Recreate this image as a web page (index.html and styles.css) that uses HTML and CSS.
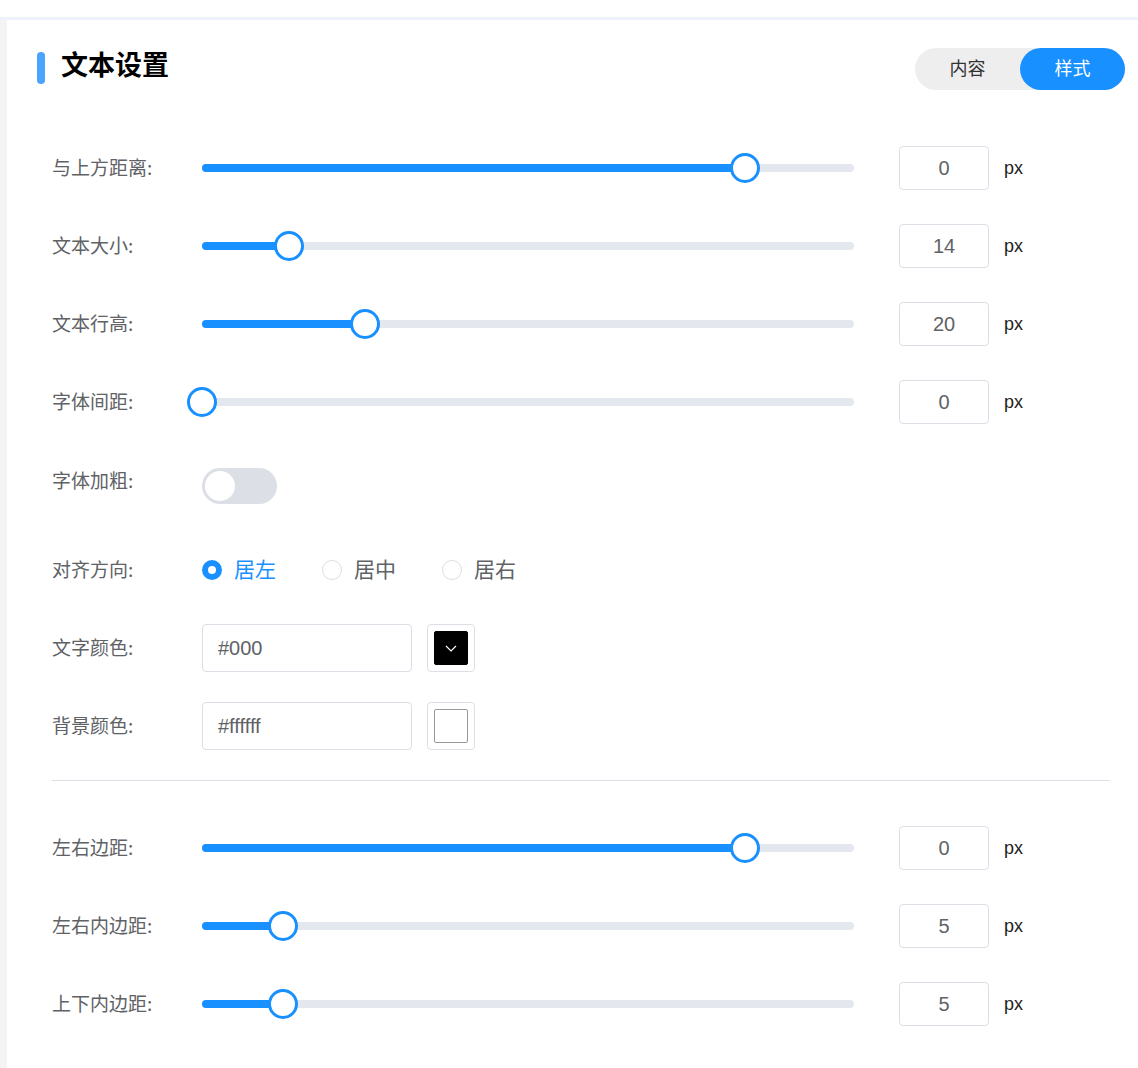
FILE: index.html
```html
<!DOCTYPE html>
<html lang="zh-CN">
<head>
    <meta charset="UTF-8">
    <title>文本设置</title>
    <link rel="stylesheet" href="styles.css">
</head>

<body>
    <div class="topbar"></div>
    <div class="page">
        <div class="side"></div>
        <div class="panel">
            <div class="header">
                <div class="title"><span class="mark"></span>文本设置</div>
                <div class="tabs">
                    <span class="tab">内容</span>
                    <span class="tab active">样式</span>
                </div>
            </div>

            <div class="form">
                <div class="row">
                    <label>与上方距离:</label>
                    <div class="slider"><div class="fill" style="width: 83.3%"></div><span class="thumb" style="left: 83.3%"></span></div>
                    <div class="num">0</div><span class="unit">px</span>
                </div>
                <div class="row">
                    <label>文本大小:</label>
                    <div class="slider"><div class="fill" style="width: 13.3%"></div><span class="thumb" style="left: 13.3%"></span></div>
                    <div class="num">14</div><span class="unit">px</span>
                </div>
                <div class="row">
                    <label>文本行高:</label>
                    <div class="slider"><div class="fill" style="width: 25%"></div><span class="thumb" style="left: 25%"></span></div>
                    <div class="num">20</div><span class="unit">px</span>
                </div>
                <div class="row">
                    <label>字体间距:</label>
                    <div class="slider"><div class="fill" style="width: 0%"></div><span class="thumb" style="left: 0%"></span></div>
                    <div class="num">0</div><span class="unit">px</span>
                </div>
                <div class="row tall">
                    <label>字体加粗:</label>
                    <span class="switch"><span class="knob"></span></span>
                </div>
                <div class="row">
                    <label>对齐方向:</label>
                    <div class="radios">
                        <span class="radio checked"><i></i>居左</span>
                        <span class="radio"><i></i>居中</span>
                        <span class="radio"><i></i>居右</span>
                    </div>
                </div>
                <div class="row">
                    <label>文字颜色:</label>
                    <div class="text-input">#000</div>
                    <div class="picker"><span class="swatch dark">
                        <svg width="14" height="14" viewBox="0 0 14 14"><path d="M2 5 L7 10 L12 5" fill="none" stroke="#fff" stroke-width="1.2"/></svg>
                    </span></div>
                </div>
                <div class="row">
                    <label>背景颜色:</label>
                    <div class="text-input">#ffffff</div>
                    <div class="picker"><span class="swatch light"></span></div>
                </div>

                <div class="divider"></div>

                <div class="row">
                    <label>左右边距:</label>
                    <div class="slider"><div class="fill" style="width: 83.3%"></div><span class="thumb" style="left: 83.3%"></span></div>
                    <div class="num">0</div><span class="unit">px</span>
                </div>
                <div class="row">
                    <label>左右内边距:</label>
                    <div class="slider"><div class="fill" style="width: 12.4%"></div><span class="thumb" style="left: 12.4%"></span></div>
                    <div class="num">5</div><span class="unit">px</span>
                </div>
                <div class="row">
                    <label>上下内边距:</label>
                    <div class="slider"><div class="fill" style="width: 12.4%"></div><span class="thumb" style="left: 12.4%"></span></div>
                    <div class="num">5</div><span class="unit">px</span>
                </div>
            </div>
        </div>
    </div>
</body>
</html>
```

FILE: styles.css
```css
body {
    margin: 0;
    background: #fff;
    font-family: "Noto Sans CJK SC", "Noto Sans", sans-serif;
    color: #606266;
}

.topbar {
    height: 17px;
    background: #fff;
    border-bottom: 3px solid #edf2fd;
}

.page {
    display: flex;
    min-height: 1048px;
}

.side {
    width: 7px;
    background: #f4f4f4;
}

.panel {
    flex: 1;
    padding: 28px 13px 0 30px;
}

.header {
    display: flex;
    justify-content: space-between;
    align-items: center;
    height: 42px;
}

.title {
    display: flex;
    align-items: center;
    font-size: 27px;
    font-weight: bold;
    color: #000;
    margin-top: -12px;
}

.mark {
    width: 8px;
    height: 32px;
    border-radius: 4px;
    background: #4aa3ff;
    margin-right: 16px;
    margin-top: 10px;
}

.tabs {
    display: flex;
    background: #eeeeee;
    border-radius: 21px;
    height: 42px;
}

.tab {
    width: 105px;
    display: flex;
    justify-content: center;
    align-items: center;
    padding-bottom: 5px;
    box-sizing: border-box;
    font-size: 18px;
    color: #333;
    border-radius: 21px;
}

.tab.active {
    background: #1890ff;
    color: #fff;
}

.form {
    padding: 39px 15px 0 15px;
}

.row {
    display: flex;
    align-items: center;
    height: 78px;
}

.row.tall {
    height: 90px;
}

.row label {
    width: 150px;
    flex-shrink: 0;
    font-size: 19px;
    color: #606266;
    margin-top: -4px;
}

.row.tall label {
    margin-top: -14px;
}

.slider {
    position: relative;
    width: 652px;
    height: 8px;
    border-radius: 4px;
    background: #e4e7ed;
}

.fill {
    height: 8px;
    border-radius: 4px;
    background: #1890ff;
}

.thumb {
    position: absolute;
    top: 50%;
    width: 24px;
    height: 24px;
    border: 3px solid #1890ff;
    border-radius: 50%;
    background: #fff;
    transform: translate(-50%, -50%);
}

.num {
    width: 88px;
    height: 42px;
    margin-left: 45px;
    border: 1px solid #dcdfe6;
    border-radius: 4px;
    display: flex;
    justify-content: center;
    align-items: center;
    font-size: 20px;
    font-family: "Liberation Sans", "Noto Sans CJK SC", sans-serif;
    color: #606266;
}

.unit {
    margin-left: 15px;
    font-size: 18px;
    font-family: "Liberation Sans", sans-serif;
    color: #222;
}

.switch {
    position: relative;
    width: 75px;
    height: 36px;
    border-radius: 18px;
    background: #dcdfe6;
}

.knob {
    position: absolute;
    left: 3px;
    top: 3px;
    width: 30px;
    height: 30px;
    border-radius: 50%;
    background: #fff;
}

.radios {
    display: flex;
}

.radio {
    display: flex;
    align-items: center;
    width: 120px;
    font-size: 21px;
    color: #606266;
}

.radio span,
.radio i {
    flex-shrink: 0;
}

.radio i {
    width: 18px;
    height: 18px;
    border: 1px solid #dcdfe6;
    border-radius: 50%;
    margin-right: 12px;
    margin-top: 4px;
    box-sizing: content-box;
}

.radio.checked {
    color: #1890ff;
}

.radio.checked i {
    width: 8px;
    height: 8px;
    border: 6px solid #1890ff;
    background: #fff;
}

.radios {
    margin-top: -4px;
}

.text-input {
    width: 193px;
    height: 46px;
    padding-left: 15px;
    border: 1px solid #dcdfe6;
    border-radius: 4px;
    display: flex;
    align-items: center;
    font-size: 20px;
    font-family: "Liberation Sans", sans-serif;
    color: #606266;
}

.picker {
    width: 46px;
    height: 46px;
    margin-left: 15px;
    border: 1px solid #dcdfe6;
    border-radius: 4px;
    display: flex;
    justify-content: center;
    align-items: center;
}

.swatch {
    width: 32px;
    height: 32px;
    border: 1px solid #999;
    border-radius: 2px;
    display: flex;
    justify-content: center;
    align-items: center;
}

.swatch.dark {
    background: #000;
    border-color: #000;
}

.swatch.light {
    background: #fff;
}

.divider {
    height: 1px;
    background: #dcdfe6;
    margin: 15px 0 28px 0;
}
```
